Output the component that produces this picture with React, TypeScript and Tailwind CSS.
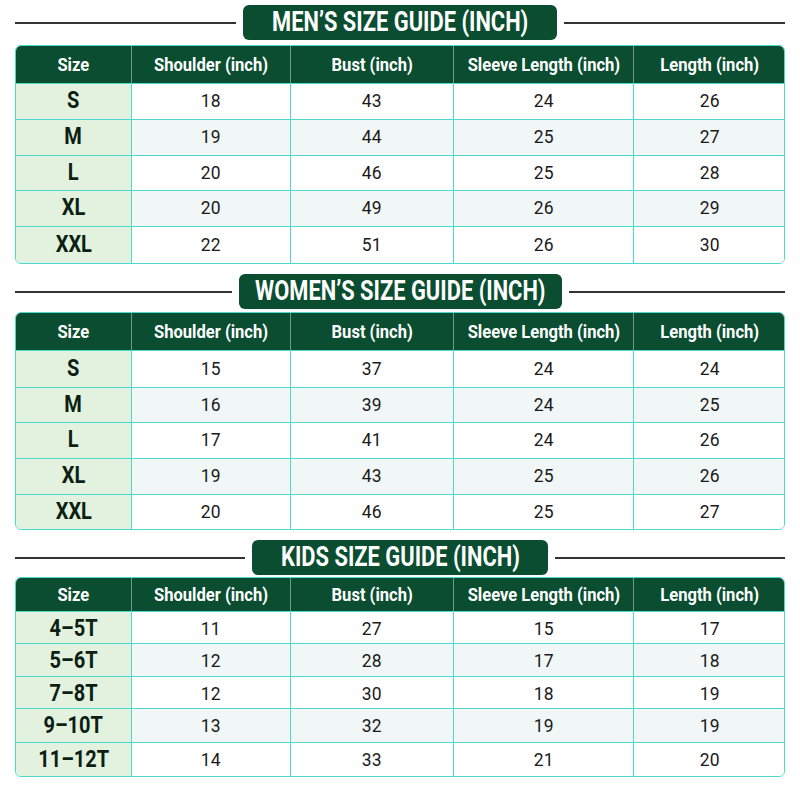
import React from 'react'

type Guide = {
  title: string
  badgeWidth: string
  rows: [string, number, number, number, number][]
  rowHeights: string[]
}

const font = { fontFamily: '"Roboto", "Liberation Sans", sans-serif' }

const guides: Guide[] = [
  {
    title: 'MEN’S SIZE GUIDE (INCH)',
    badgeWidth: 'w-[314px]',
    rows: [
      ['S', 18, 43, 24, 26],
      ['M', 19, 44, 25, 27],
      ['L', 20, 46, 25, 28],
      ['XL', 20, 49, 26, 29],
      ['XXL', 22, 51, 26, 30],
    ],
    rowHeights: ['h-[36px]', 'h-[36px]', 'h-[35px]', 'h-[36px]', 'h-[37px]'],
  },
  {
    title: 'WOMEN’S SIZE GUIDE (INCH)',
    badgeWidth: 'w-[323px]',
    rows: [
      ['S', 15, 37, 24, 24],
      ['M', 16, 39, 24, 25],
      ['L', 17, 41, 24, 26],
      ['XL', 19, 43, 25, 26],
      ['XXL', 20, 46, 25, 27],
    ],
    rowHeights: ['h-[37px]', 'h-[35px]', 'h-[36px]', 'h-[36px]', 'h-[35px]'],
  },
  {
    title: 'KIDS SIZE GUIDE (INCH)',
    badgeWidth: 'w-[296px]',
    rows: [
      ['4–5T', 11, 27, 15, 17],
      ['5–6T', 12, 28, 17, 18],
      ['7–8T', 12, 30, 18, 19],
      ['9–10T', 13, 32, 19, 19],
      ['11–12T', 14, 33, 21, 20],
    ],
    rowHeights: ['h-[32px]', 'h-[33px]', 'h-[32px]', 'h-[34px]', 'h-[34px]'],
  },
]

const headers = ['Size', 'Shoulder (inch)', 'Bust (inch)', 'Sleeve Length (inch)', 'Length (inch)']
const cols = 'grid grid-cols-[115px_159px_163px_180px_153px]'

function SizeTable({ guide, headerH }: { guide: Guide; headerH: string }) {
  return (
    <div className="overflow-hidden rounded-[6px] border border-[#4fd8cc] bg-white">
      <div className={`${cols} ${headerH} bg-[#0a4d30] text-white`}>
        {headers.map((h, i) => (
          <div
            key={h}
            className={`flex items-center justify-center ${i > 0 ? 'border-l border-[#6d9a84]' : ''}`}
          >
            <span className="inline-block scale-x-[0.92] whitespace-nowrap text-[18px] font-bold">{h}</span>
          </div>
        ))}
      </div>
      {guide.rows.map((r, ri) => {
        const stripe = ri % 2 === 1 ? 'bg-[#f1f6f6]' : 'bg-white'
        return (
          <div key={r[0]} className={`${cols} ${guide.rowHeights[ri]}`}>
            <div className="flex items-center justify-center border-t border-[#4fd8cc] bg-[#e2f2de] text-[#0d1f14]">
              <span className="inline-block scale-x-[0.87] whitespace-nowrap text-[23px] font-bold">{r[0]}</span>
            </div>
            {r.slice(1).map((v, ci) => (
              <div
                key={ci}
                className={`flex items-center justify-center border-t border-l border-[#4fd8cc] text-[#1a1a1a] ${stripe}`}
              >
                <span className="inline-block scale-x-[0.92] text-[19px]">{v}</span>
              </div>
            ))}
          </div>
        )
      })}
    </div>
  )
}

function Heading({ title, width }: { title: string; width: string }) {
  return (
    <div className="flex h-[35px] items-center gap-[7px]">
      <div className="h-[2px] flex-1 bg-[#333]" />
      <div
        className={`${width} flex h-[35px] items-center justify-center overflow-hidden rounded-[6px] bg-[#0a4d30] text-white`}
      >
        <span className="inline-block scale-x-[0.81] whitespace-nowrap text-[27px] font-bold">{title}</span>
      </div>
      <div className="h-[2px] flex-1 bg-[#333]" />
    </div>
  )
}

export default function App() {
  return (
    <div className="h-[800px] w-[800px] bg-white px-[15px] pt-[5px]" style={font}>
      <div className="flex flex-col">
        <Heading title={guides[0].title} width={guides[0].badgeWidth} />
        <div className="mt-[5px]">
          <SizeTable guide={guides[0]} headerH="h-[37px]" />
        </div>

        <div className="mt-[10px]">
          <Heading title={guides[1].title} width={guides[1].badgeWidth} />
        </div>
        <div className="mt-[3px]">
          <SizeTable guide={guides[1]} headerH="h-[37px]" />
        </div>

        <div className="mt-[10px]">
          <Heading title={guides[2].title} width={guides[2].badgeWidth} />
        </div>
        <div className="mt-[2px]">
          <SizeTable guide={guides[2]} headerH="h-[33px]" />
        </div>
      </div>
    </div>
  )
}
